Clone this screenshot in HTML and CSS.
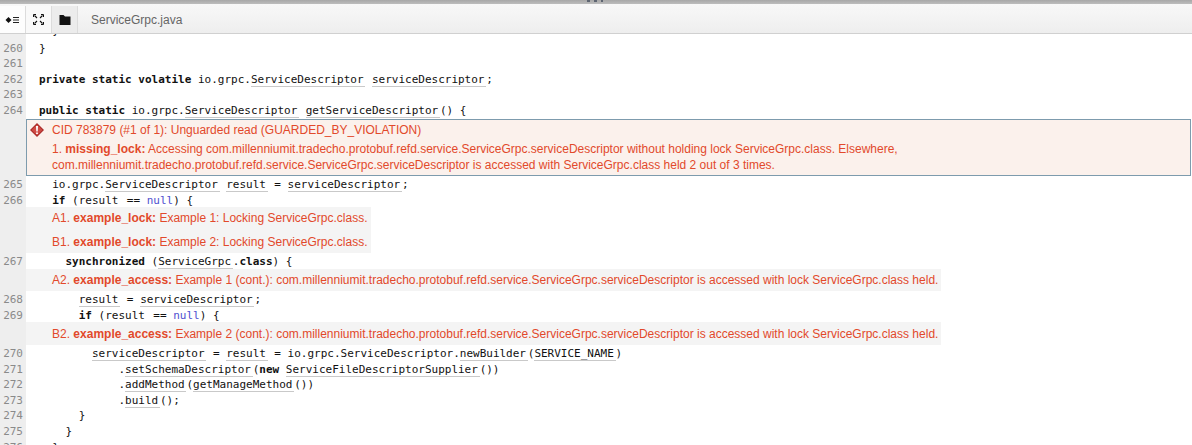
FILE: index.html
```html
<!DOCTYPE html>
<html lang="en">
<head>
<meta charset="utf-8">
<title>ServiceGrpc.java</title>
<link rel="stylesheet" href="styles.css">
</head>
<body>
<div class="window-top"><span class="grip"></span></div>
<div class="toolbar">
  <button class="tool tool-first" aria-label="Events"><svg width="16" height="10" viewBox="0 0 16 10"><path d="M3.500 2 6.500 5 3.500 8 .5 5z" fill="#111"/><path d="M8 2.500h6M8 5h6M8 7.500h6" stroke="#222" stroke-width="1"/></svg></button>
  <button class="tool" aria-label="Fullscreen"><svg width="11" height="11" viewBox="0 0 11 11" fill="none" stroke="#111"><path d="M.5 3V.5H3M8 .5h2.500V3M.5 8v2.500H3M8 10.500h2.500V8"/><path d="M1.500 1.500l2.500 2.500M9.500 1.500 7 4M1.500 9.500 4 7M9.500 9.500 7 7" stroke-width="1.100"/></svg></button>
  <button class="tool tool-active" aria-label="Files"><svg width="12" height="10" viewBox="0 0 12 10"><path d="M.5 0h4l1.500 1.500h5.500V10H.5z" fill="#111"/></svg></button>
  <span class="file-name">ServiceGrpc.java</span>
</div>
<main class="code">
  <div class="line clipped"><span class="num">259</span><span class="src">  }</span></div>
  <div class="line"><span class="num">260</span><span class="src">}</span></div>
  <div class="line"><span class="num">261</span><span class="src"></span></div>
  <div class="line"><span class="num">262</span><span class="src"><b>private static volatile</b> io.grpc.<span class="u">ServiceDescriptor</span> <span class="u">serviceDescriptor</span>;</span></div>
  <div class="line"><span class="num">263</span><span class="src"></span></div>
  <div class="line"><span class="num">264</span><span class="src"><b>public static</b> io.grpc.<span class="u">ServiceDescriptor</span> <span class="u">getServiceDescriptor</span>() {</span></div>
  <section class="event-box">
    <svg class="event-icon" width="14" height="14" viewBox="0 0 14 14"><path d="M7 0 14 7 7 14 0 7z" fill="#a92c2a"/><path d="M7 1.500 12.500 7 7 12.500 1.500 7z" fill="#cf4a44"/><path d="M6 3h2l-.3 5.500H6.300zM6.100 9.400h1.800v1.600H6.100z" fill="#fff"/></svg>
    <h2 class="event-title">CID 783879 (#1 of 1): Unguarded read (GUARDED_BY_VIOLATION)</h2>
    <p class="event-text">1. <b>missing_lock:</b> Accessing com.millenniumit.tradecho.protobuf.refd.service.ServiceGrpc.serviceDescriptor without holding lock ServiceGrpc.class. Elsewhere,<br>com.millenniumit.tradecho.protobuf.refd.service.ServiceGrpc.serviceDescriptor is accessed with ServiceGrpc.class held 2 out of 3 times.</p>
  </section>
  <div class="line"><span class="num">265</span><span class="src">  io.grpc.<span class="u">ServiceDescriptor</span> <span class="u">result</span> = <span class="u">serviceDescriptor</span>;</span></div>
  <div class="line"><span class="num">266</span><span class="src">  <b>if</b> (<span class="u">result</span> == <span class="kw">null</span>) {</span></div>
  <div class="note note-first"><span class="note-text">A1. <b>example_lock:</b> Example 1: Locking ServiceGrpc.class.</span></div>
  <div class="note note-second"><span class="note-text">B1. <b>example_lock:</b> Example 2: Locking ServiceGrpc.class.</span></div>
  <div class="line"><span class="num">267</span><span class="src">    <b>synchronized</b> (<span class="u">ServiceGrpc</span>.<b>class</b>) {</span></div>
  <div class="note"><span class="note-text">A2. <b>example_access:</b> Example 1 (cont.): com.millenniumit.tradecho.protobuf.refd.service.ServiceGrpc.serviceDescriptor is accessed with lock ServiceGrpc.class held.</span></div>
  <div class="line"><span class="num">268</span><span class="src">      <span class="u">result</span> = <span class="u">serviceDescriptor</span>;</span></div>
  <div class="line"><span class="num">269</span><span class="src">      <b>if</b> (<span class="u">result</span> == <span class="kw">null</span>) {</span></div>
  <div class="note"><span class="note-text">B2. <b>example_access:</b> Example 2 (cont.): com.millenniumit.tradecho.protobuf.refd.service.ServiceGrpc.serviceDescriptor is accessed with lock ServiceGrpc.class held.</span></div>
  <div class="line"><span class="num">270</span><span class="src">        <span class="u">serviceDescriptor</span> = <span class="u">result</span> = io.grpc.ServiceDescriptor.<span class="u">newBuilder</span>(<span class="u">SERVICE_NAME</span>)</span></div>
  <div class="line"><span class="num">271</span><span class="src">            .<span class="u">setSchemaDescriptor</span>(<b>new</b> <span class="u">ServiceFileDescriptorSupplier</span>())</span></div>
  <div class="line"><span class="num">272</span><span class="src">            .<span class="u">addMethod</span>(<span class="u">getManageMethod</span>())</span></div>
  <div class="line"><span class="num">273</span><span class="src">            .<span class="u">build</span>();</span></div>
  <div class="line"><span class="num">274</span><span class="src">      }</span></div>
  <div class="line"><span class="num">275</span><span class="src">    }</span></div>
  <div class="line"><span class="num">276</span><span class="src">  }</span></div>
</main>
</body>
</html>
```
FILE: styles.css
```css
* { box-sizing: border-box; }
html, body { margin: 0; height: 445px; overflow: hidden; background: #fff; }
body { display: flex; flex-direction: column; }

.window-top {
  height: 4px; flex: none; display: flex; justify-content: center;
  background: linear-gradient(#a8a8a8, #bdbdbd);
}
.grip {
  width: 16px; height: 2px; margin-left: -2px;
  background: repeating-linear-gradient(90deg, #5f6672 0 3px, transparent 3px 7px);
}

.toolbar {
  height: 30px; flex: none; display: flex; align-items: stretch;
  background: linear-gradient(#f8f8f8, #eeeeee);
  border-bottom: 1px solid #d0d0d0;
}
.tool {
  width: 26px; padding: 0; margin: 2px 0 0; border: 0;
  border-right: 1px solid #dcdcdc; background: #f9f9f9;
  display: flex; align-items: center; justify-content: center;
}
.tool-first { background: #fdfdfd; }
.tool-active { background: #ececec; }
.file-name {
  margin: 3px 0 0 13px; align-self: center;
  font: 12px "Liberation Sans", Arial, sans-serif; color: #666;
}

.code {
  flex: 1; min-height: 0; overflow: hidden;
  background: linear-gradient(90deg, #eeeeee 26px, #ffffff 26px);
}
.line {
  display: flex; height: 15.6px;
  font: 11px/17.6px "DejaVu Sans Mono", monospace; color: #111;
}
.line.clipped { height: 5.5px; align-items: flex-end; overflow: hidden; }
.num {
  flex: none; width: 26px; padding-right: 3px; text-align: right;
  color: #8a8a8a;
}
.src { padding-left: 13px; white-space: pre; }
.src b { font-weight: 700; }
.u { border-bottom: 1px solid #c9c9c9; padding-right: 1.75px; }
.kw { color: #4f4fd0; }

.event-box {
  position: relative; height: 57px; margin: 1.5px 1px 0 26px;
  padding: 2px 0 0 25px;
  background: #fbf1ec; border: 1px solid #7d9bad;
  font: 12px "Liberation Sans", Arial, sans-serif; color: #e2492b;
}
.event-icon { position: absolute; left: 3px; top: 3px; }
.event-title { margin: 0; font: inherit; line-height: 16px; }
.event-text { margin: 3px 0 0; line-height: 16px; }

.note {
  display: flex; height: 22.7px;
  font: 12px "Liberation Sans", Arial, sans-serif; color: #e2492b;
}
.note-first { height: 21.8px; }
.note-second { height: 24px; }
.note-second .note-text { padding-top: 2px; }
.note-text {
  margin-left: 26px; padding: 0 3px 0 26px;
  display: flex; align-items: center;
  background: #f4f4f4; white-space: pre;
}
```
